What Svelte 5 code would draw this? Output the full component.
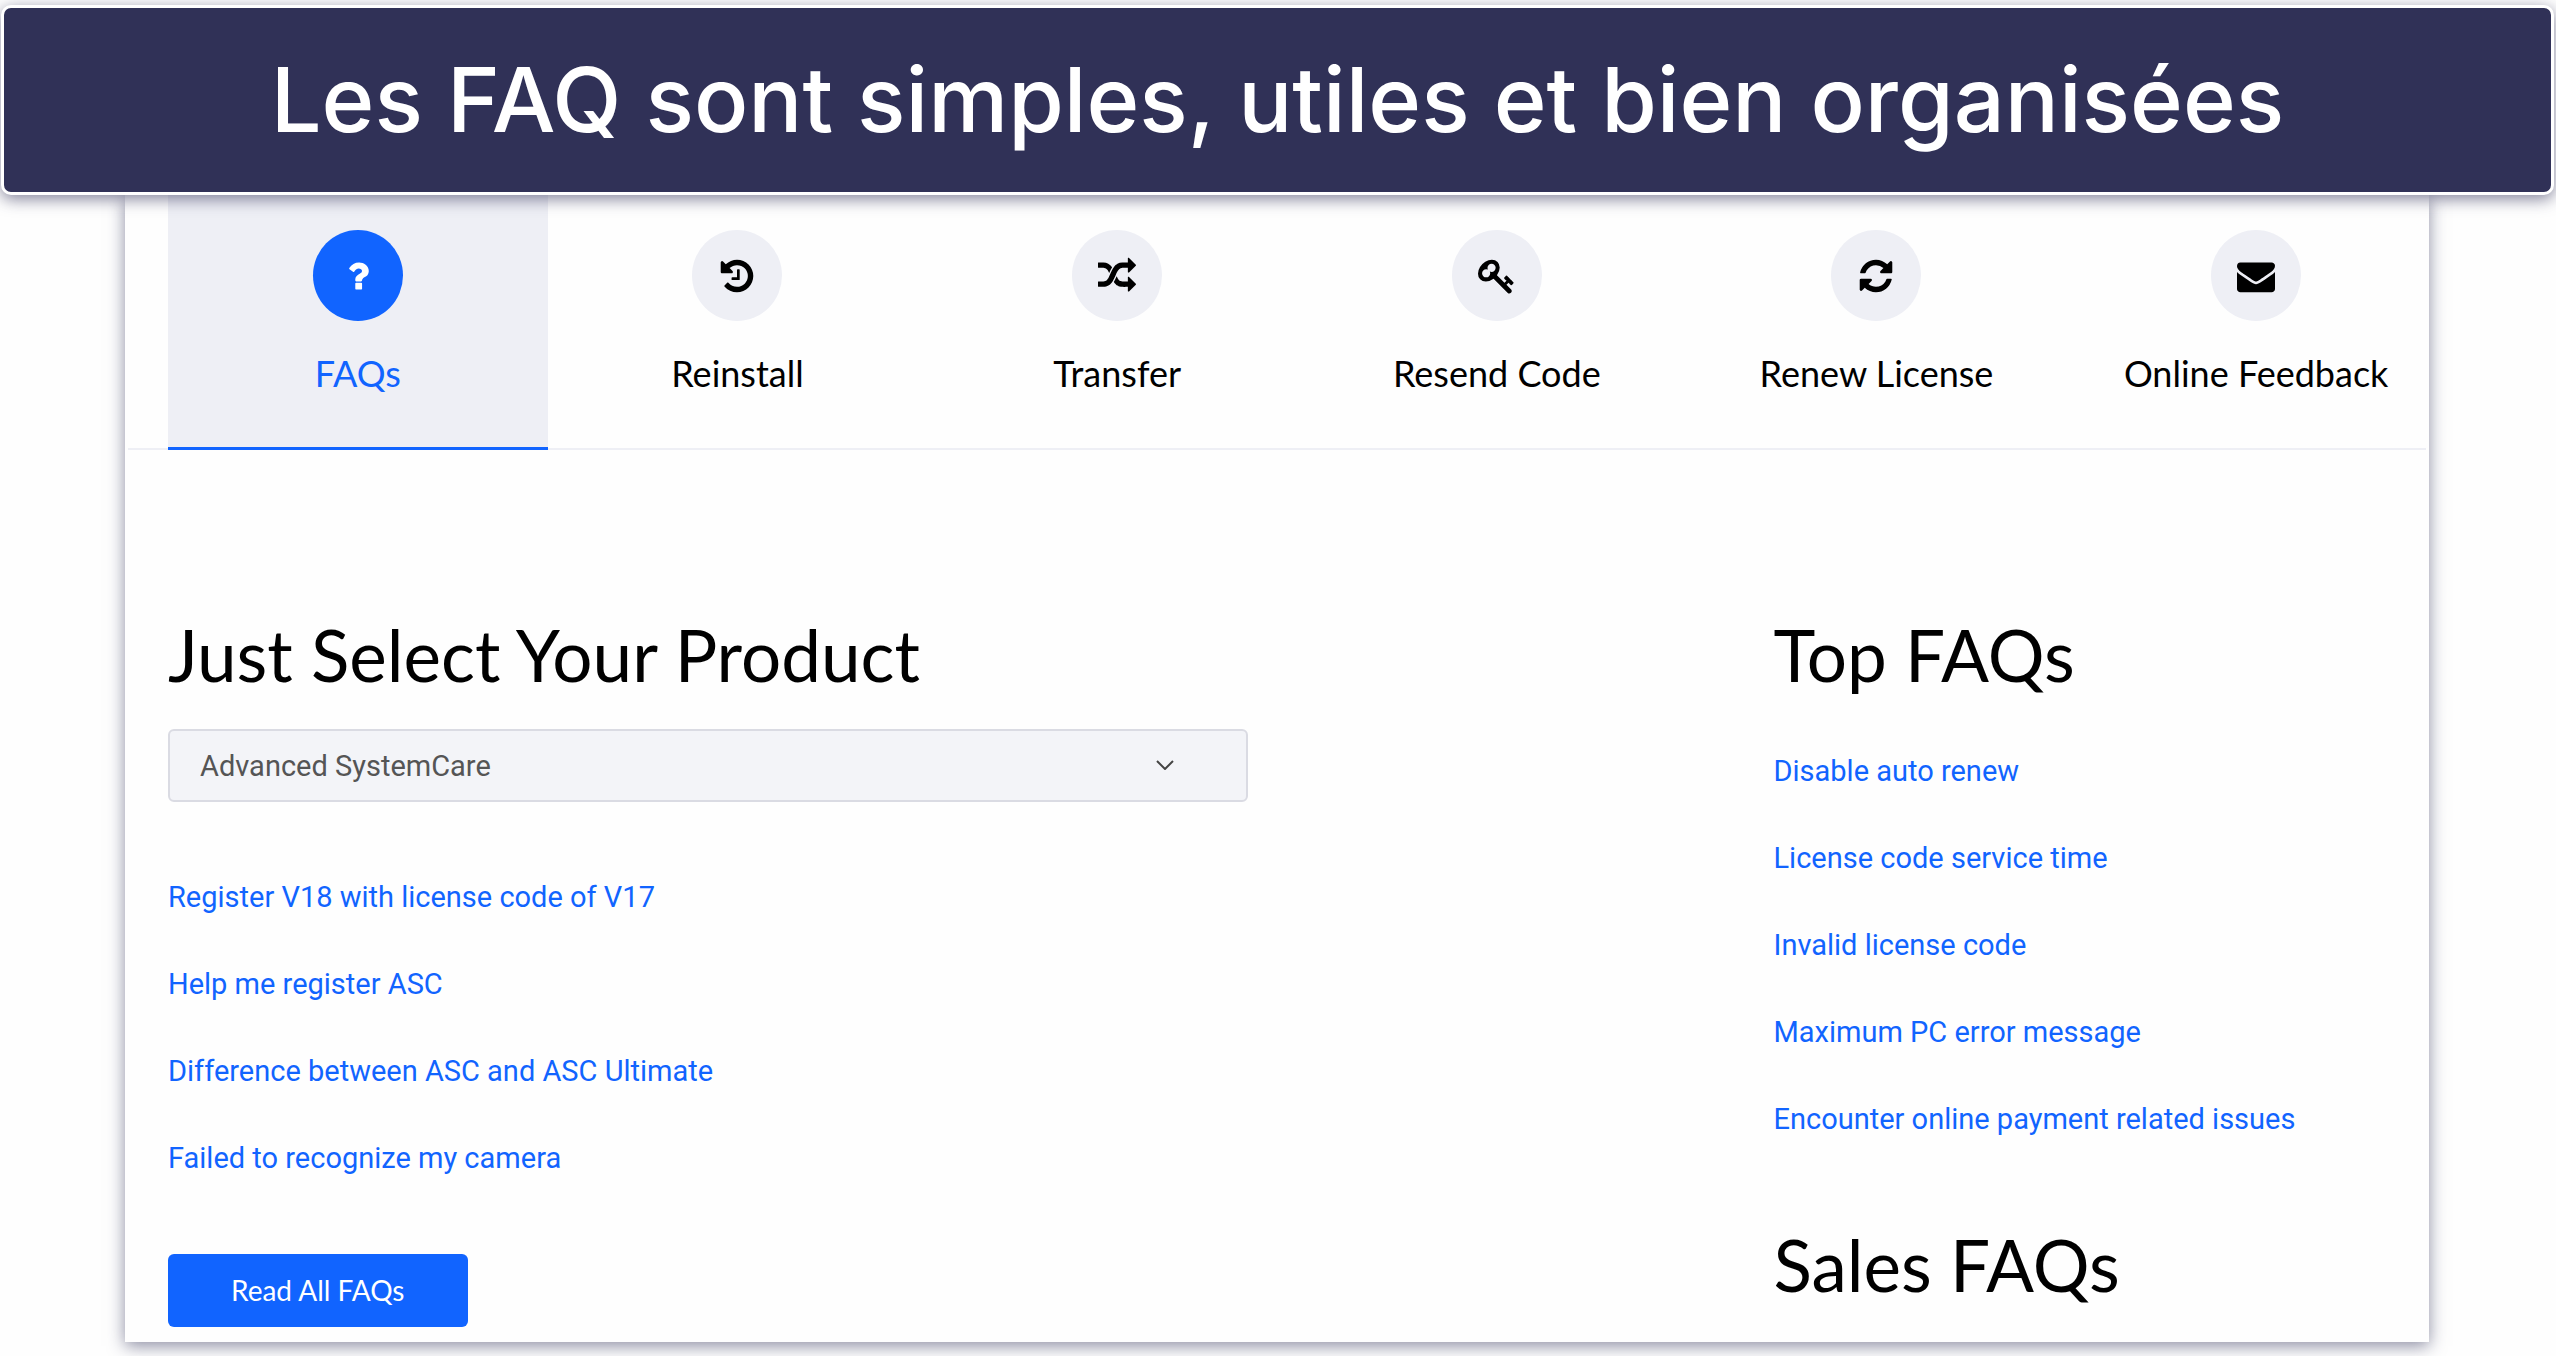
<script lang="ts">
    type Tab = { name: string; icon: string };
    type Faq = { name: string; url: string };

    const tabs: Tab[] = [
        {
            name: 'FAQs',
            icon: 'M1088 1256v240q0 16-12 28t-28 12h-240q-16 0-28-12t-12-28v-240q0-16 12-28t28-12h240q16 0 28 12t12 28zm316-600q0 54-15.5 101t-35 76.5-55 59.5-57.5 43.5-61 35.5q-41 23-68.5 65t-27.5 67q0 17-12 32.5t-28 15.5h-240q-15 0-25.5-18.5t-10.5-37.5v-45q0-83 65-156.5t143-108.5q59-27 84-56t25-76q0-42-46.5-74t-107.5-32q-65 0-108 29-35 25-107 115-13 16-31 16-12 0-25-8l-164-125q-13-10-15.5-25t5.5-28q160-266 464-266 80 0 161 31t146 83 106 127.5 41 158.5z',
        },
        {
            name: 'Reinstall',
            icon: 'M1664 896q0 156-61 298t-164 245-245 164-298 61q-172 0-327-72.5t-264-204.5q-7-10-6.5-22.5t8.5-20.5l137-138q10-9 25-9 16 2 23 12 73 95 179 147t225 52q104 0 198.5-40.5t163.5-109.5 109.5-163.5 40.5-198.5-40.5-198.5-109.5-163.5-163.5-109.5-198.5-40.5q-98 0-188 35.5t-160 101.5l137 138q31 30 14 69-17 40-59 40h-448q-26 0-45-19t-19-45v-448q0-42 40-59 39-17 69 14l130 129q107-101 244.5-156.5t284.5-55.5q156 0 298 61t245 164 164 245 61 298zm-640-288v448q0 14-9 23t-23 9h-320q-14 0-23-9t-9-23v-64q0-14 9-23t23-9h224v-352q0-14 9-23t23-9h64q14 0 23 9t9 23z',
        },
        {
            name: 'Transfer',
            icon: 'M666 481q-60 92-137 273-22-45-37-72.5t-40.5-63.5-51-56.5-63-35-81.5-14.5h-224q-14 0-23-9t-9-23v-192q0-14 9-23t23-9h224q250 0 410 225zm1126 799q0 14-9 23l-320 320q-9 9-23 9-13 0-22.5-9.5t-9.5-22.5v-192q-32 0-85 .5t-81 1-73-1-71-5-64-10.5-63-18.5-58-28.5-59-40-55-53.5-56-69.5q59-93 136-273 22 45 37 72.5t40.5 63.5 51 56.5 63 35 81.5 14.5h256v-192q0-14 9-23t23-9q12 0 24 10l319 319q9 9 9 23zm0-896q0 14-9 23l-320 320q-9 9-23 9-13 0-22.5-9.5t-9.5-22.5v-192h-256q-48 0-87 15t-69 45-51 61.5-45 77.5q-32 62-78 171-29 66-49.5 111t-54 105-64 100-74 83-90 68.5-106.5 42-128 16.5h-224q-14 0-23-9t-9-23v-192q0-14 9-23t23-9h224q48 0 87-15t69-45 51-61.5 45-77.5q32-62 78-171 29-66 49.5-111t54-105 64-100 74-83 90-68.5 106.5-42 128-16.5h256v-192q0-14 9-23t23-9q12 0 24 10l319 319q9 9 9 23z',
        },
        {
            name: 'Resend Code',
            icon: 'M832 512q0-80-56-136t-136-56-136 56-56 136q0 42 19 83-41-19-83-19-80 0-136 56t-56 136 56 136 136 56 136-56 56-136q0-42-19-83 41 19 83 19 80 0 136-56t56-136zm851 704q0 17-49 66t-66 49q-9 0-28.5-16t-36.5-33-38.5-40-24.5-26l-96 96 220 220q28 28 28 68 0 42-39 81t-81 39q-40 0-68-28l-671-671q-176 131-365 131-163 0-265.5-102.5t-102.5-265.5q0-160 95-313t248-248 313-95q163 0 265.5 102.5t102.5 265.5q0 189-131 365l355 355 96-96q-3-3-26-24.5t-40-38.5-33-36.5-16-28.5q0-17 49-66t66-49q13 0 23 10 6 6 46 44.5t82 79.5 86.5 86 73 78 28.5 41z',
        },
        {
            name: 'Renew License',
            icon: 'M1639 1056q0 5-1 7-64 268-268 434.5t-478 166.5q-146 0-282.5-55t-243.5-157l-129 129q-19 19-45 19t-45-19-19-45v-448q0-26 19-45t45-19h448q26 0 45 19t19 45-19 45l-137 137q71 66 161 102t187 36q134 0 250-65t186-179q11-17 53-117 8-23 30-23h192q13 0 22.5 9.5t9.5 22.5zm25-800v448q0 26-19 45t-45 19h-448q-26 0-45-19t-19-45 19-45l138-138q-148-137-349-137-134 0-250 65t-186 179q-11 17-53 117-8 23-30 23h-199q-13 0-22.5-9.5t-9.5-22.5v-7q65-268 270-434.5t480-166.5q146 0 284 55.5t245 156.5l130-129q19-19 45-19t45 19 19 45z',
        },
        {
            name: 'Online Feedback',
            icon: 'M1792 710v794q0 66-47 113t-113 47h-1472q-66 0-113-47t-47-113v-794q44 49 101 87 362 246 497 345 57 42 92.5 65.5t94.5 48 110 24.5h2q51 0 110-24.5t94.5-48 92.5-65.5q170-123 498-345 57-39 100-87zm0-294q0 79-49 151t-122 123q-376 261-468 325-10 7-42.5 31t-54 38.5-52 32.5-57.5 27-50 9h-2q-23 0-50-9t-57.5-27-52-32.5-54-38.5-42.5-31q-91-64-262-182.5t-205-142.5q-62-42-117-115.5t-55-136.5q0-78 41.5-130t118.5-52h1472q65 0 112.5 47t47.5 113z',
        },
    ];

    const productFaqs: Faq[] = [
        { name: 'Register V18 with license code of V17', url: '#register-v18' },
        { name: 'Help me register ASC', url: '#register-asc' },
        { name: 'Difference between ASC and ASC Ultimate', url: '#difference' },
        { name: 'Failed to recognize my camera', url: '#camera' },
    ];

    const topFaqs: Faq[] = [
        { name: 'Disable auto renew', url: '#auto-renew' },
        { name: 'License code service time', url: '#service-time' },
        { name: 'Invalid license code', url: '#invalid-code' },
        { name: 'Maximum PC error message', url: '#maximum-pc' },
        { name: 'Encounter online payment related issues', url: '#payment' },
    ];

    let current = $state('FAQs');
    let product = $state('Advanced SystemCare');
</script>

{#snippet faqList(faqs: Faq[])}
    <ul>
        {#each faqs as faq}
            <li><a href={faq.url}>{faq.name}</a></li>
        {/each}
    </ul>
{/snippet}

<header>
    <h1>Les FAQ sont simples, utiles et bien organisées</h1>
</header>

<main>
    <nav>
        {#each tabs as tab}
            <button
                class="tab"
                class:active={current === tab.name}
                onclick={() => (current = tab.name)}
            >
                <span class="circle">
                    <svg viewBox="0 0 1792 1792" aria-hidden="true">
                        <path d={tab.icon} />
                    </svg>
                </span>
                {tab.name}
            </button>
        {/each}
    </nav>

    <div class="content">
        <section class="product">
            <h2><label for="product">Just Select Your Product</label></h2>
            <div class="select">
                <select id="product" bind:value={product}>
                    <option>Advanced SystemCare</option>
                </select>
                <svg viewBox="0 0 18 10" aria-hidden="true">
                    <path d="M1 1l8 8 8-8" />
                </svg>
            </div>
            {@render faqList(productFaqs)}
            <a class="readAll" href="#all">Read All FAQs</a>
        </section>

        <section class="top">
            <h2>Top FAQs</h2>
            {@render faqList(topFaqs)}
            <h2>Sales FAQs</h2>
        </section>
    </div>
</main>

<style>
    :global(body) {
        background-color: #fefefe;
        font-family: Roboto, 'Liberation Sans', sans-serif;
    }

    header {
        position: relative;
        z-index: 1;
        margin: 5px 2px 0 1px;
        padding: 32px 0;
        border: 3px solid #fff;
        border-radius: 10px;
        background-color: #303157;
        box-shadow: 0 4px 16px rgba(48, 49, 87, 0.6);
        color: #fff;
        text-align: center;
    }

    h1 {
        margin: 0;
        font-family: Inter, sans-serif;
        font-size: 90px;
        font-weight: 500;
        line-height: 120px;
    }

    main {
        margin: 0 127px 14px 125px;
        padding: 0 3px;
        background-color: #fefefe;
        box-shadow: 0 4px 16px rgba(48, 49, 87, 0.55);
    }

    nav {
        display: grid;
        grid-template-columns: repeat(6, 1fr);
        padding-left: 40px;
        margin-right: -20px;
        /* the last tab runs past the card, the rule stops at its edge */
        background: linear-gradient(#eeeff5, #eeeff5) 0 100% / calc(100% - 20px) 2px no-repeat;
    }

    .tab {
        display: flex;
        flex-direction: column;
        align-items: center;
        gap: 28px;
        padding: 35px 0 50px;
        border: 0;
        border-bottom: 3px solid transparent;
        background: none;
        color: #000;
        font-family: Lato, sans-serif;
        font-size: 36px;
        line-height: 48px;
        white-space: nowrap;
        cursor: pointer;
    }

    .circle {
        display: grid;
        place-items: center;
        width: 90px;
        height: 91px;
        border-radius: 50%;
        background-color: #eeeff5;
    }

    .circle svg {
        width: 38px;
        height: 38px;
        fill: #000;
    }

    .active {
        border-bottom-color: #1164ff;
        background-color: #eeeff5;
        color: #1164ff;
    }

    .active .circle {
        background-color: #1164ff;
    }

    .active svg {
        fill: #fff;
    }

    .content {
        display: grid;
        grid-template-columns: 71fr 29fr;
        column-gap: 8px;
        padding: 157px 0 15px 40px;
    }

    h2 {
        margin: 0;
        color: #000;
        font-family: Lato, sans-serif;
        font-size: 71px;
        font-weight: 400;
        line-height: 96px;
    }

    .select {
        position: relative;
        max-width: 1080px;
        margin: 26px 0 75px;
    }

    .select svg {
        position: absolute;
        top: 31px;
        right: 74px;
        width: 18px;
        height: 10px;
        fill: none;
        stroke: #444;
        stroke-width: 2;
        pointer-events: none;
    }

    select {
        display: block;
        width: 100%;
        height: 73px;
        padding: 0 30px;
        border: 2px solid #dadbe3;
        border-radius: 6px;
        appearance: none;
        background-color: #f3f4f8;
        color: #555;
        font-family: inherit;
        font-size: 29px;
    }

    ul {
        display: flex;
        flex-direction: column;
        gap: 47px;
        margin: 0;
        padding: 0;
        list-style: none;
        font-size: 29px;
        line-height: 40px;
    }

    a {
        color: #1164ff;
        text-decoration: none;
    }

    .readAll {
        display: inline-block;
        margin-top: 76px;
        padding: 0 63px;
        border-radius: 6px;
        background-color: #1164ff;
        color: #fff;
        font-family: Lato, sans-serif;
        font-size: 28px;
        line-height: 73px;
        vertical-align: top;
    }

    .top ul {
        margin: 48px 0 78px;
    }
</style>
